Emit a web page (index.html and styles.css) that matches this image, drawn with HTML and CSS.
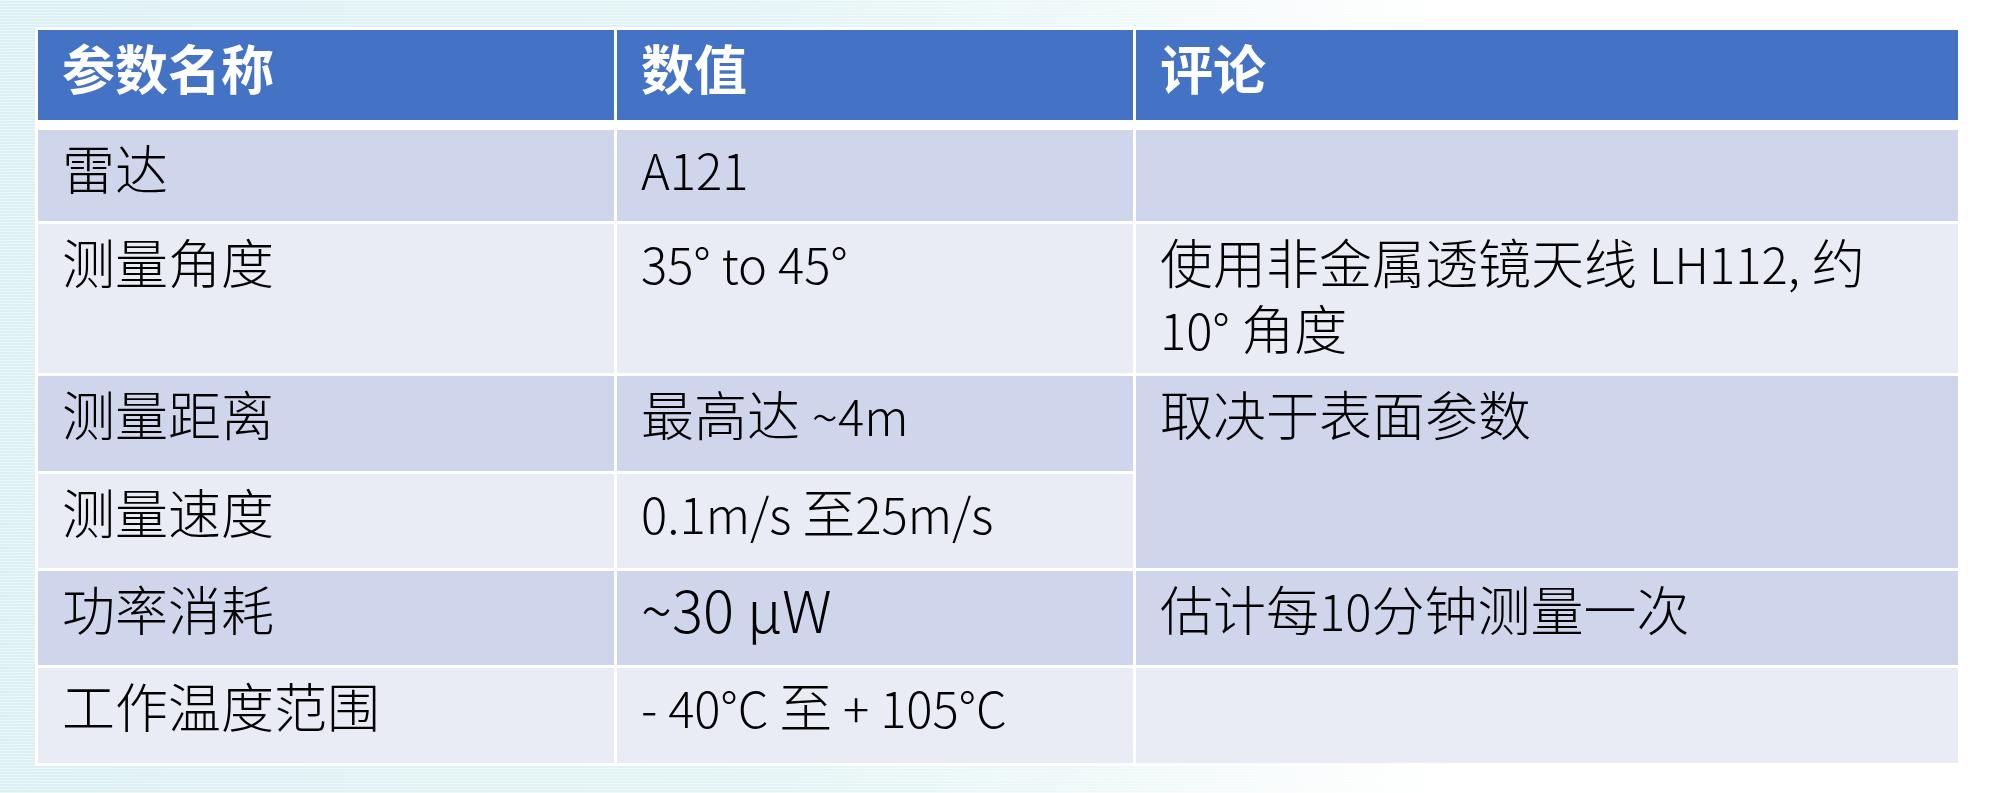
FILE: index.html
```html
<!DOCTYPE html>
<html lang="zh-CN">
<head>
<meta charset="utf-8">
<title>参数表</title>
<link rel="stylesheet" href="styles.css">
</head>
<body>
<div class="slide">
  <div class="spec-table">
    <div class="cell head">参数名称</div>
    <div class="cell head">数值</div>
    <div class="cell head">评论</div>

    <div class="cell dark">雷达</div>
    <div class="cell dark"><span class="en">A121</span></div>
    <div class="cell dark"></div>

    <div class="cell light">测量角度</div>
    <div class="cell light"><span class="en">35° to 45°</span></div>
    <div class="cell light">使用非金属透镜天线 <span class="en">LH112,</span> 约<br><span class="en">10°</span> 角度</div>

    <div class="cell dark">测量距离</div>
    <div class="cell dark">最高达 <span class="en">~4m</span></div>
    <div class="cell dark span2">取决于表面参数</div>

    <div class="cell light">测量速度</div>
    <div class="cell light"><span class="en">0.1m/s </span>至<span class="en">25m/s</span></div>

    <div class="cell dark">功率消耗</div>
    <div class="cell dark"><span class="en big">~30 µW</span></div>
    <div class="cell dark">估计每<span class="en">10</span>分钟测量一次</div>

    <div class="cell light">工作温度范围</div>
    <div class="cell light"><span class="en">- 40°C </span>至<span class="en"> + 105°C</span></div>
    <div class="cell light"></div>
  </div>
</div>
</body>
</html>
```

FILE: styles.css
```css
html, body {
  margin: 0;
  padding: 0;
}

body {
  width: 2001px;
  height: 793px;
  overflow: hidden;
  font-family: "Noto Sans CJK SC", "Noto Sans", sans-serif;
  color: #000;
  background:
    repeating-linear-gradient(0deg, rgba(255,255,255,0.45) 0 1px, rgba(255,255,255,0) 1px 3px),
    linear-gradient(90deg, #dcf0f3 0px, #e2f3f5 700px, #eef8f9 1100px, #fbfdfd 1350px, #ffffff 1450px);
}

.slide {
  padding: 27px 0 0 35px;
}

.spec-table {
  display: inline-grid;
  grid-template-columns: 576px 516px 822px;
  grid-template-rows: 97px 91px 149px 95px 94px 94px 95px;
  gap: 3px;
  padding: 3px;
  background: #ffffff;
}

.cell {
  box-sizing: border-box;
  padding: 5px 20px 0 24px;
  font-size: 53px;
  font-weight: 300;
  line-height: 64px;
  white-space: nowrap;
}

.en {
  font-size: 49px;
}

.head {
  background: #4472c4;
  color: #ffffff;
  font-weight: 700;
  border-bottom: 7px solid #ffffff;
  padding-top: 5px;
}

.dark {
  background: #cfd5ea;
}

.light {
  background: #e9ebf5;
}

.span2 {
  grid-row: span 2;
}

.big {
  font-size: 58px;
}
```
